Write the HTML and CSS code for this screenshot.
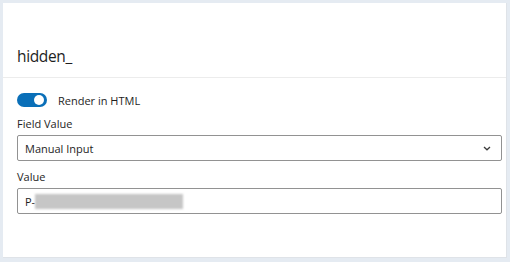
FILE: index.html
```html
<!DOCTYPE html>
<html>
<head>
<meta charset="utf-8">
<link rel="stylesheet" href="styles.css">
</head>
<body>
<div class="frame">
  <div class="panel">
    <div class="header"><h2 class="title">hidden_</h2></div>
    <div class="content">
      <label class="toggle-row">
        <span class="toggle"><span class="knob"></span></span>
        <span class="toggle-label">Render in HTML</span>
      </label>
      <div class="field">
        <div class="label">Field Value</div>
        <div class="select">
          <span>Manual Input</span>
          <svg class="chev" width="8" height="5" viewBox="0 0 8 5"><path d="M1 1 L4 3.8 L7 1" fill="none" stroke="#3c3c3c" stroke-width="1.3"/></svg>
        </div>
      </div>
      <div class="field">
        <div class="label">Value</div>
        <div class="input"><span>P-</span><span class="redact"></span></div>
      </div>
    </div>
  </div>
</div>
</body>
</html>
```
FILE: styles.css
```css
html, body { margin: 0; padding: 0; }
body {
  width: 510px; height: 262px;
  background: #e5ebf2;
  font-family: "Open Sans", "Noto Sans", sans-serif;
  color: #1e1e1e;
}
.frame { padding: 3px 3px 4px 3px; box-sizing: border-box; height: 262px; }
.panel {
  background: #fff; height: 255px; box-sizing: border-box;
  border-right: 1px solid #dfe3e8; border-bottom: 1px solid #dfe3e8;
}
.header {
  height: 75px; box-sizing: border-box;
  border-bottom: 1px solid #ececec;
  display: flex; align-items: flex-end;
  padding: 0 14px 11px;
}
.title { margin: 0; font-size: 15.5px; font-weight: 400; line-height: 20px; letter-spacing: -0.35px; }
.content { padding: 14px 4px 0 14px; display: flex; flex-direction: column; }
.toggle-row { display: flex; align-items: center; gap: 11px; height: 16px; }
.toggle {
  width: 30px; height: 14px; border-radius: 8px; background: #0a6fb8;
  position: relative; display: block; box-sizing: border-box;
}
.knob {
  position: absolute; right: 3px; top: 2px;
  width: 10px; height: 10px; border-radius: 50%; background: #fff;
}
.toggle-label { font-size: 11px; }
.field { margin-top: 8px; }
.label { font-size: 11px; line-height: 15px; margin-bottom: 4px; }
.select, .input {
  height: 26px; box-sizing: border-box;
  border: 1px solid #929292; border-radius: 2px;
  display: flex; align-items: center;
  padding: 0 10px 0 7px; font-size: 11px;
}
.select { justify-content: space-between; }
.redact {
  display: inline-block; width: 148px; height: 15px; background: #c6c6c6;
  filter: blur(0.8px);
}
```
